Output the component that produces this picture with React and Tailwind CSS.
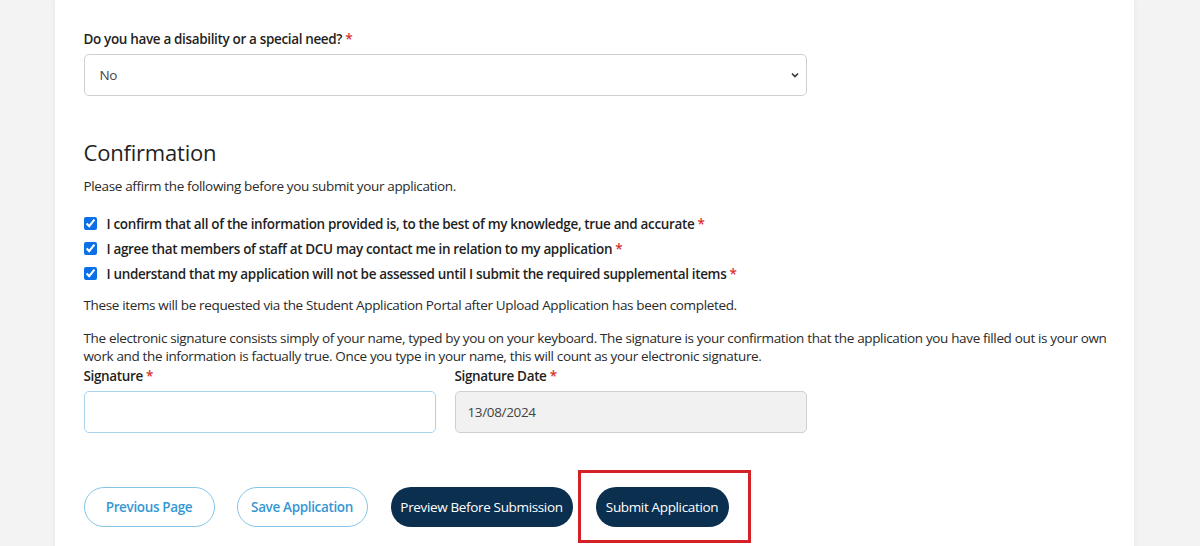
import React from "react";

const Star = () => <span className="text-[#d9302c]"> *</span>;

function Check({ children }) {
  return (
    <label className="flex items-center h-[25px]">
      <input type="checkbox" checked readOnly className="w-[13px] h-[13px] m-0 accent-[#0b6fe8]" />
      <span className="ml-[10px] font-semibold text-[#1f1f1f]">{children}<Star /></span>
    </label>
  );
}

export default function App() {
  return (
    <div className="min-h-[546px] bg-[#f3f3f3] flex justify-center overflow-hidden" style={{ fontFamily: '"Open Sans", "Noto Sans", sans-serif' }}>
      <div className="w-[1079px] ml-[-12px] bg-white shadow-[0_0_6px_rgba(0,0,0,0.06)] pl-[29px] pr-[24px] pt-[29px] text-[13.5px] leading-[20px] text-[#2a2a2a] tracking-[-0.35px]">
        <div className="font-semibold text-[#1f1f1f] mb-[5px]">Do you have a disability or a special need?<Star /></div>
        <div className="w-[723px] h-[42px] border border-[#cfcfcf] rounded-[5px] flex items-center justify-between pl-[15px] pr-[5px] text-[#444]">
          <span>No</span>
          <svg width="12" height="12" viewBox="0 0 12 12" fill="none" stroke="#333" strokeWidth="1.6"><path d="M3 4.5l3 3 3-3" /></svg>
        </div>

        <h2 className="mt-[43px] text-[22px] leading-[26px] font-normal text-[#1f1f1f] tracking-[-0.2px]">Confirmation</h2>
        <p className="mt-[11px]">Please affirm the following before you submit your application.</p>

        <div className="mt-[15px]">
          <Check>I confirm that all of the information provided is, to the best of my knowledge, true and accurate</Check>
          <Check>I agree that members of staff at DCU may contact me in relation to my application</Check>
          <Check>I understand that my application will not be assessed until I submit the required supplemental items</Check>
        </div>

        <p className="mt-[9px]">These items will be requested via the Student Application Portal after Upload Application has been completed.</p>

        <p className="mt-[14px] leading-[18px] w-[1030px]">The electronic signature consists simply of your name, typed by you on your keyboard. The signature is your confirmation that the application you have filled out is your own work and the information is factually true. Once you type in your name, this will count as your electronic signature.</p>

        <div className="grid grid-cols-[352px_352px] gap-x-[19px] mt-[1px]">
          <div>
            <div className="font-semibold text-[#1f1f1f] mb-[5px]">Signature<Star /></div>
            <div className="h-[42px] border border-[#a9d2ee] rounded-[5px]"></div>
          </div>
          <div>
            <div className="font-semibold text-[#1f1f1f] mb-[5px]">Signature Date<Star /></div>
            <div className="h-[42px] border border-[#cfcfcf] rounded-[5px] bg-[#f1f1f1] flex items-center pl-[12px] text-[#444]">13/08/2024</div>
          </div>
        </div>

        <div className="flex items-start mt-[37px] pb-[10px]">
          <button className="mt-[17px] h-[40px] w-[131px] rounded-full border border-[#86c5e8] text-[#3597d3] font-semibold">Previous Page</button>
          <button className="mt-[17px] ml-[22px] h-[40px] w-[131px] rounded-full border border-[#86c5e8] text-[#3597d3] font-semibold">Save Application</button>
          <button className="mt-[17px] ml-[23px] h-[40px] w-[182px] rounded-full bg-[#0b2f4e] text-white font-medium">Preview Before Submission</button>
          <div className="ml-[5px] border-[3px] border-[#d42027] pt-[14px] pb-[13px] pl-[15px] pr-[19px]">
            <button className="h-[40px] w-[133px] rounded-full bg-[#0b2f4e] text-white font-medium block">Submit Application</button>
          </div>
        </div>
      </div>
    </div>
  );
}
